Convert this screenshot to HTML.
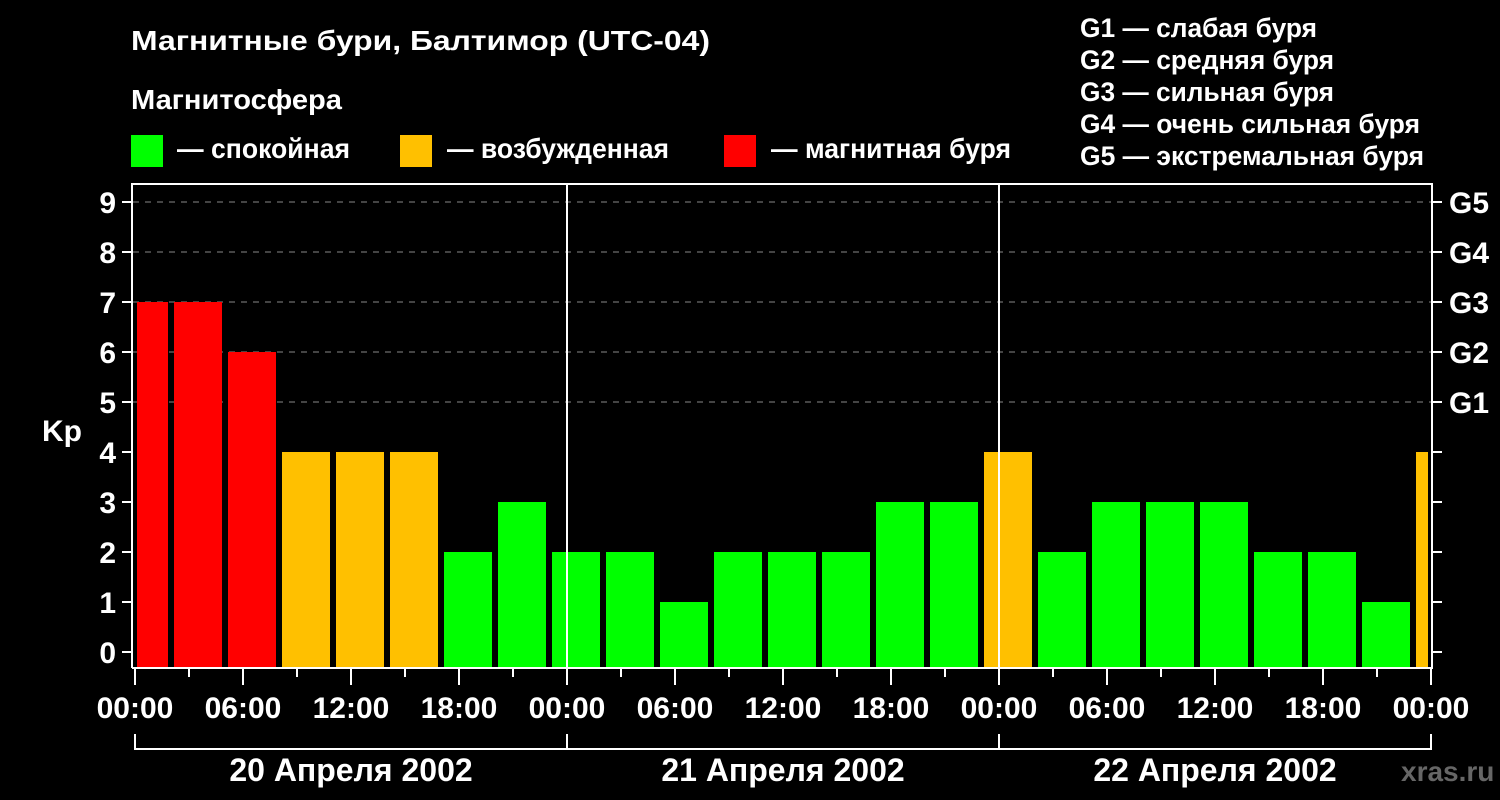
<!DOCTYPE html>
<html><head><meta charset="utf-8"><style>html,body{margin:0;padding:0;background:#000}svg{display:block}text{font-family:"Liberation Sans",sans-serif;font-weight:bold;fill:#fff}</style></head><body>
<svg width="1500" height="800" xmlns="http://www.w3.org/2000/svg">
<rect width="1500" height="800" fill="#000"/>
<text x="131" y="50" font-size="28" textLength="579" lengthAdjust="spacingAndGlyphs">Магнитные бури, Балтимор (UTC-04)</text>
<text x="131" y="109" font-size="28" textLength="211" lengthAdjust="spacingAndGlyphs">Магнитосфера</text>
<rect x="131" y="135" width="32" height="32" fill="#00ff00"/>
<text x="177" y="158" font-size="28" textLength="173" lengthAdjust="spacingAndGlyphs">— спокойная</text>
<rect x="400" y="135" width="32" height="32" fill="#ffc000"/>
<text x="447" y="158" font-size="28" textLength="222" lengthAdjust="spacingAndGlyphs">— возбужденная</text>
<rect x="724" y="135" width="32" height="32" fill="#ff0000"/>
<text x="771" y="158" font-size="28" textLength="240" lengthAdjust="spacingAndGlyphs">— магнитная буря</text>
<g font-size="27">
<text x="1080" y="37" textLength="237" lengthAdjust="spacingAndGlyphs">G1 — слабая буря</text>
<text x="1080" y="69" textLength="254" lengthAdjust="spacingAndGlyphs">G2 — средняя буря</text>
<text x="1080" y="101" textLength="254" lengthAdjust="spacingAndGlyphs">G3 — сильная буря</text>
<text x="1080" y="133" textLength="340" lengthAdjust="spacingAndGlyphs">G4 — очень сильная буря</text>
<text x="1080" y="165" textLength="344" lengthAdjust="spacingAndGlyphs">G5 — экстремальная буря</text>
</g>
<g stroke="#888" stroke-width="1" stroke-dasharray="6,6">
<line x1="133" y1="202" x2="1432" y2="202"/><line x1="133" y1="252" x2="1432" y2="252"/><line x1="133" y1="302" x2="1432" y2="302"/><line x1="133" y1="352" x2="1432" y2="352"/><line x1="133" y1="402" x2="1432" y2="402"/>
</g>
<g>
<rect x="137" y="302" width="31" height="366" fill="#ff0000"/>
<rect x="174" y="302" width="48" height="366" fill="#ff0000"/>
<rect x="228" y="352" width="48" height="316" fill="#ff0000"/>
<rect x="282" y="452" width="48" height="216" fill="#ffc000"/>
<rect x="336" y="452" width="48" height="216" fill="#ffc000"/>
<rect x="390" y="452" width="48" height="216" fill="#ffc000"/>
<rect x="444" y="552" width="48" height="116" fill="#00ff00"/>
<rect x="498" y="502" width="48" height="166" fill="#00ff00"/>
<rect x="552" y="552" width="48" height="116" fill="#00ff00"/>
<rect x="606" y="552" width="48" height="116" fill="#00ff00"/>
<rect x="660" y="602" width="48" height="66" fill="#00ff00"/>
<rect x="714" y="552" width="48" height="116" fill="#00ff00"/>
<rect x="768" y="552" width="48" height="116" fill="#00ff00"/>
<rect x="822" y="552" width="48" height="116" fill="#00ff00"/>
<rect x="876" y="502" width="48" height="166" fill="#00ff00"/>
<rect x="930" y="502" width="48" height="166" fill="#00ff00"/>
<rect x="984" y="452" width="48" height="216" fill="#ffc000"/>
<rect x="1038" y="552" width="48" height="116" fill="#00ff00"/>
<rect x="1092" y="502" width="48" height="166" fill="#00ff00"/>
<rect x="1146" y="502" width="48" height="166" fill="#00ff00"/>
<rect x="1200" y="502" width="48" height="166" fill="#00ff00"/>
<rect x="1254" y="552" width="48" height="116" fill="#00ff00"/>
<rect x="1308" y="552" width="48" height="116" fill="#00ff00"/>
<rect x="1362" y="602" width="48" height="66" fill="#00ff00"/>
<rect x="1416" y="452" width="12" height="216" fill="#ffc000"/>
</g>
<g stroke="#fff" stroke-width="2" fill="none">
<path d="M132,668 V184 H1432 V668 H132"/>
<line x1="567" y1="184" x2="567" y2="668"/><line x1="999" y1="184" x2="999" y2="668"/>
<path d="M122,202h10M122,252h10M122,302h10M122,352h10M122,402h10M122,452h10M122,502h10M122,552h10M122,602h10M122,652h10"/>
<path d="M1432,202h10M1432,252h10M1432,302h10M1432,352h10M1432,402h10M1432,452h10M1432,502h10M1432,552h10M1432,602h10M1432,652h10"/>
<path d="M135,668v17M243,668v17M351,668v17M459,668v17M567,668v17M675,668v17M783,668v17M891,668v17M999,668v17M1107,668v17M1215,668v17M1323,668v17M1431,668v17"/>
<path d="M189,668v9M297,668v9M405,668v9M513,668v9M621,668v9M729,668v9M837,668v9M945,668v9M1053,668v9M1161,668v9M1269,668v9M1377,668v9"/>
<path d="M135,734V749H1431V734M567,734v15M999,734v15"/>
</g>
<g font-size="30" text-anchor="end">
<text x="116" y="213">9</text><text x="116" y="263">8</text><text x="116" y="313">7</text><text x="116" y="363">6</text><text x="116" y="413">5</text><text x="116" y="463">4</text><text x="116" y="513">3</text><text x="116" y="563">2</text><text x="116" y="613">1</text><text x="116" y="663">0</text>
</g>
<text x="42" y="441" font-size="30">Kp</text>
<g font-size="30">
<text x="1449" y="213">G5</text><text x="1449" y="263">G4</text><text x="1449" y="313">G3</text><text x="1449" y="363">G2</text><text x="1449" y="413">G1</text>
</g>
<g font-size="30" text-anchor="middle">
<text x="135" y="718">00:00</text><text x="243" y="718">06:00</text><text x="351" y="718">12:00</text><text x="459" y="718">18:00</text><text x="567" y="718">00:00</text><text x="675" y="718">06:00</text><text x="783" y="718">12:00</text><text x="891" y="718">18:00</text><text x="999" y="718">00:00</text><text x="1107" y="718">06:00</text><text x="1215" y="718">12:00</text><text x="1323" y="718">18:00</text><text x="1431" y="718">00:00</text>
</g>
<g font-size="32" text-anchor="middle">
<text x="351" y="781">20 Апреля 2002</text><text x="783" y="781">21 Апреля 2002</text><text x="1215" y="781">22 Апреля 2002</text>
</g>
<text x="1401" y="781" font-size="28" style="fill:#666">xras.ru</text>
</svg>
</body></html>
